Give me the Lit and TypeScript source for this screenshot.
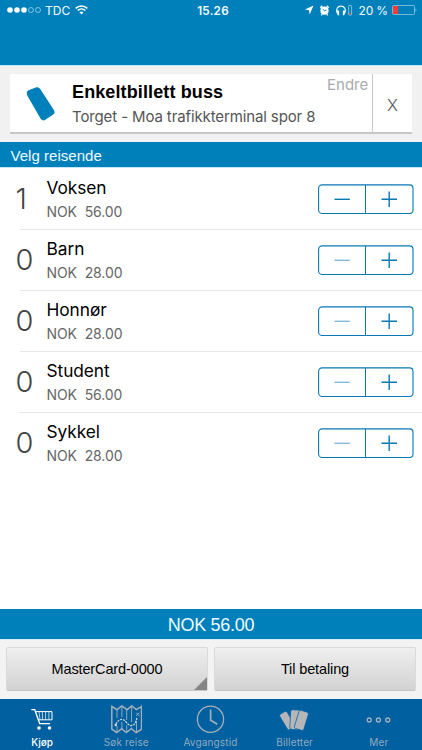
import { LitElement, html, css, svg } from "lit";
import { customElement, property, state } from "lit/decorators.js";
import { classMap } from "lit/directives/class-map.js";

@customElement("status-bar")
class StatusBar extends LitElement {
  static styles = css`
    :host { display: flex; height: 20px; position: relative; color: #f2fbff; font: 500 12px/20px Inter, sans-serif; }
    svg { display: block; }
    .left, .right { display: flex; align-items: center; }
    .left { padding-left: 7px; flex: 1; }
    .carrier { font-weight: 400; margin: 1px 5px 0 3px; letter-spacing: 0; }
    .time { width: 60px; text-align: center; padding-top: 1px; font-weight: 600; margin-left: 2px; font-size: 11.7px; letter-spacing: 0.25px; }
    .right { flex: 1; justify-content: flex-end; padding-right: 5px; }
    .pct { font-weight: 400; margin: 1px 4px 0 6px; white-space: nowrap; letter-spacing: -0.15px; }
  `;
  render() {
    return html`
      <div class="left">
        <svg width="35" height="10" viewBox="0 0 35 10">
          <g fill="#fff"><circle cx="3" cy="5" r="2.8" /><circle cx="10" cy="5" r="2.8" /><circle cx="17" cy="5" r="2.8" /></g>
          <g fill="none" stroke="#9fd2ea" stroke-width=".8"><circle cx="24" cy="5" r="2.5" /><circle cx="31" cy="5" r="2.5" /></g>
        </svg>
        <span class="carrier">TDC</span>
        <svg width="13" height="10" viewBox="0 0 13 10" fill="none" stroke="#fff" stroke-width="1.5">
          <path d="M.7 3.4C4 .1 9 .1 12.3 3.4M2.7 5.5c2.2-2.1 5.4-2.1 7.6 0" />
          <path d="M6.5 9.4 4.5 7.3c1.2-1 2.8-1 4 0z" fill="#fff" stroke="none" />
        </svg>
      </div>
      <div class="time">15.26</div>
      <div class="right">
        <svg width="50" height="14" viewBox="0 0 50 14">
          <path d="M10.5 2.5 6.7 11.5 6 7.3 2 6.6z" fill="#fff" />
          <circle cx="21.5" cy="7.7" r="4.1" fill="#fff" />
          <path d="M17.3 4.7l2-2M25.7 4.7l-2-2M19 11.3l-.7 1M24 11.3l.7 1" stroke="#fff" stroke-width="1.4" />
          <path d="M19.7 6l1.8 1.7 2-.6" stroke="#0080bb" fill="none" stroke-width=".9" />
          <path d="M34.2 10.2C30.5 .8 45.5 .8 41.8 10.2" stroke="#e6f6fd" stroke-width="1.2" fill="none" />
          <path d="M33.5 7.6h2.6v4.6h-1.4zM42.5 7.6h-2.6v4.6h1.4z" fill="#fff" />
          <rect x="45.6" y="2.5" width="3" height="9.5" rx=".6" fill="none" stroke="#9fd2ea" stroke-width=".8" />
          <path d="M46.3 9.7h1.6v1.8h-1.6z" fill="#ff4136" />
        </svg>
        <span class="pct">20 %</span>
        <svg width="25" height="10" viewBox="0 0 25 10">
          <rect x=".5" y=".5" width="22" height="9" rx="1.3" fill="none" stroke="#8fc6df" stroke-width=".8" />
          <rect x="1" y="1" width="5" height="8" fill="#fb3b35" />
          <path d="M23.7 3.3q1.3 1.7 0 3.4z" fill="#cdeaf6" />
        </svg>
      </div>
    `;
  }
}

@customElement("ticket-card")
class TicketCard extends LitElement {
  static styles = css`
    :host { display: flex; height: 58px; background: #fff; box-shadow: 0 2px 0 #c7c7c9; font-family: Inter, sans-serif; }
    .icon { width: 62px; flex: none; display: flex; }
    .body { flex: 1; display: flex; flex-direction: column; white-space: nowrap; padding-top: 7px; }
    .title { font: bold 18px/22px "Liberation Sans", Arial, sans-serif; letter-spacing: 0.12px; color: #000; }
    .route { font-size: 15px; line-height: 20px; padding-top: 4px; color: #555; letter-spacing: -0.12px; }
    .edit { width: 45px; flex: none; font-size: 15px; line-height: 20px; padding-top: 1px; color: #a9a9ad; }
    .close { width: 39px; flex: none; border-left: 1px solid #c9c9cb; text-align: center; font: 300 16.5px/62px Inter, sans-serif; color: #555; height: 60px; }
  `;
  render() {
    return html`
      <div class="icon">
        <svg width="62" height="58" viewBox="0 0 62 58">
          <path d="M18.5 16.2 26.4 13.3Q28.7 12.6 30.2 15L44.2 36.5Q45.3 38.7 43.3 40.4L35.3 45.8Q32.7 47.5 30.8 45L17.5 22Q15.5 17.8 18.5 16.2z" fill="#0080bb" />
        </svg>
      </div>
      <div class="body">
        <span class="title">Enkeltbillett buss</span>
        <span class="route">Torget - Moa trafikkterminal spor 8</span>
      </div>
      <span class="edit">Endre</span>
      <span class="close">X</span>
    `;
  }
}

@customElement("traveller-row")
class TravellerRow extends LitElement {
  @property() name = "";
  @property() price = "";
  @property({ type: Number }) count = 0;
  static styles = css`
    :host { display: flex; height: 61px; position: relative; font-family: Inter, sans-serif; }
    .count { width: 31px; padding: 10px 0 0 15.5px; box-sizing: content-box; font: 300 29px/40px Inter, sans-serif; color: #444; }
    .text { flex: 1; display: flex; flex-direction: column; padding-top: 8px; }
    .name { font-size: 17.3px; line-height: 22px; color: #000; letter-spacing: -0.05px; }
    .price { font-size: 14px; line-height: 18px; padding-top: 4px; color: #666; white-space: pre; letter-spacing: -0.08px; }
    .stepper { margin: 15px 8px 0 0; width: 96px; height: 30px; flex: none; }
    .dim { opacity: 0.5; }
  `;
  render() {
    return html`
      <span class="count">${this.count}</span>
      <div class="text">
        <span class="name">${this.name}</span>
        <span class="price">NOK  ${this.price}</span>
      </div>
      <svg class="stepper" viewBox="0 0 96 30" fill="none" stroke="#0878b4">
        <rect x=".6" y=".9" width="94.4" height="28.6" rx="3.5" stroke-width="1.1" />
        <path d="M47.5 1v28" />
        <path class=${classMap({ dim: this.count === 0 })} d="M16.5 15.3h15.3" stroke-width="1.4" />
        <path d="M63.5 15.3h15.5M71.2 7.6v15.4" stroke-width="1.4" />
      </svg>
      <slot></slot>
    `;
  }
}

const icons: Record<string, unknown> = {
  cart: svg`<g fill="none" stroke="#fff"><path d="M4.3 6.6h3.4l5 14h10.4" stroke-width="1.4"/><path d="M8.6 8.6h16.4v8.2H11.6" stroke-width="1"/><path d="M12 8.6l1 8M15.3 8.6l.4 8M18.6 8.6v8M21.9 8.6v8" stroke-width=".8" opacity=".85"/></g><circle cx="12" cy="25" r="1.8" fill="#fff"/><circle cx="22.5" cy="25" r="1.8" fill="#fff"/>`,
  map: svg`<g fill="none" stroke="#a3b0bb"><path d="M.8 3.5 6 6.7l5-3.7 5 3.7 4.7-3.7 4.8 3.7 5-3.3v23L25.3 29.5l-5-3.8-5 3.8-4.7-3.8-4.8 3.8-5-3.3z" stroke-width="1.5"/><path d="M6 7v8M6 23v6M10.9 4v10M10.9 19v7M15.7 7v10M15.7 22.5V29M20.6 4v15M20.6 24.5V26M25.5 18v11" stroke-width=".9"/><path d="M4.8 21.5C8.5 14.5 12.5 15.5 15.5 19.5S24.5 25 26 14" stroke-width="1.3" stroke-dasharray="2.2 .9" stroke="#cdd3d8"/><path d="m25.2 9.7 3 3.2m0-3.2-3 3.2"/></g><circle cx="4.8" cy="22" r="1.3" fill="#cdd3d8"/>`,
  clock: svg`<g fill="none" stroke="#a3b0bb"><circle cx="15.5" cy="16.2" r="13.1" stroke-width="1.3"/><path d="M15.6 6.5v10.7l6.7 4" stroke-width="1.7"/></g>`,
  tickets: svg`<g fill="#b4b6ba" stroke="#0060a0" stroke-width=".7"><rect x="4" y="8.6" width="8.5" height="18" rx="1.8" transform="rotate(-31 8.2 17.6)"/><rect x="11.2" y="6.9" width="9.6" height="19.6" rx="1.8" transform="rotate(3 16 17)"/><rect x="17.6" y="7.7" width="9.8" height="19" rx="1.8" transform="rotate(17 22 17)"/></g>`,
  more: svg`<g fill="none" stroke="#a3b0bb" stroke-width="1.3"><circle cx="6.2" cy="17" r="2"/><circle cx="15.4" cy="17" r="2"/><circle cx="24.7" cy="17" r="2"/></g>`,
};

@customElement("tab-bar")
class TabBar extends LitElement {
  @state() active = "cart";
  private tabs = [
    ["cart", "Kjøp"],
    ["map", "Søk reise"],
    ["clock", "Avgangstid"],
    ["tickets", "Billetter"],
    ["more", "Mer"],
  ];
  static styles = css`
    :host { display: grid; grid-template-columns: repeat(5, 84.2px); height: 51px; background: #0060a0; }
    .tab { display: flex; flex-direction: column; align-items: center; padding-top: 4px; color: #92a9bd; font: 400 10px/12px Inter, sans-serif; letter-spacing: 0.15px; }
    .on { color: #fff; font-weight: 500; letter-spacing: 0; }
    svg { width: 31px; height: 32px; display: block; margin-bottom: 2px; flex: none; }
    .tab span { margin-top: -1px; }
  `;
  render() {
    return this.tabs.map(
      ([id, label]) => html`<div class=${classMap({ tab: true, on: id === this.active })}>
        <svg viewBox="0 0 31 32">${icons[id]}</svg><span>${label}</span>
      </div>`
    );
  }
}

@customElement("app-root")
class AppRoot extends LitElement {
  private travellers = [
    { name: "Voksen", price: "56.00", count: 1 },
    { name: "Barn", price: "28.00", count: 0 },
    { name: "Honnør", price: "28.00", count: 0 },
    { name: "Student", price: "56.00", count: 0 },
    { name: "Sykkel", price: "28.00", count: 0 },
  ];
  static styles = css`
    :host { display: flex; flex-direction: column; width: 422px; height: 750px; background: #fff; overflow: hidden; font-family: "Liberation Sans", Arial, sans-serif; }
    .header { height: 65px; background: #0080bb; flex: none; }
    .panel { height: 76px; background: #f1f1f2; border-top: 1px solid #c4e7f5; box-sizing: content-box; flex: none; }
    ticket-card { margin: 8px 10px 0; }
    .section { height: 25px; background: #0080bb; color: #eefaff; font-size: 15px; line-height: 27px; letter-spacing: 0.03px; padding-left: 10.5px; border-bottom: 1px solid #c4e7f5; flex: none; }
    .list { flex: 1; display: flex; flex-direction: column; padding-top: 1px; }
    .sep { display: block; height: 1px; margin-left: 20px; background: #e6e6e8; position: absolute; left: 0; right: 0; bottom: 0; }
    .total { height: 31px; background: #0080bb; color: #eefaff; text-align: center; font-size: 18px; line-height: 32px; letter-spacing: -0.3px; flex: none; }
    .actions { display: flex; gap: 6px; padding: 7px 6px 8px; height: 44px; background: #f3f3f3; border-top: 1px solid #d3ecf6; margin-top: -1px; flex: none; }
    .btn { flex: 1; box-sizing: border-box; border: 1px solid #dadada; border-bottom-color: #c6c6c6; border-radius: 2px; background: linear-gradient(#efefef, #d2d2d2); text-align: center; font-size: 14.5px; line-height: 43px; letter-spacing: -0.12px; color: #000; position: relative; }
    .corner { position: absolute; right: 0; bottom: 0; width: 13px; height: 13px; background: #858585; clip-path: polygon(100% 0, 100% 100%, 0 100%); }
  `;
  render() {
    return html`
      <div class="header"><status-bar></status-bar></div>
      <div class="panel"><ticket-card></ticket-card></div>
      <div class="section">Velg reisende</div>
      <div class="list">
        ${this.travellers.map(
          (t, i) => html`<traveller-row .name=${t.name} .price=${t.price} .count=${t.count}>
            ${i < this.travellers.length - 1 ? html`<i class="sep"></i>` : ""}
          </traveller-row>`
        )}
      </div>
      <div class="total">NOK 56.00</div>
      <div class="actions">
        <div class="btn">MasterCard-0000<i class="corner"></i></div>
        <div class="btn">Til betaling</div>
      </div>
      <tab-bar></tab-bar>
    `;
  }
}
